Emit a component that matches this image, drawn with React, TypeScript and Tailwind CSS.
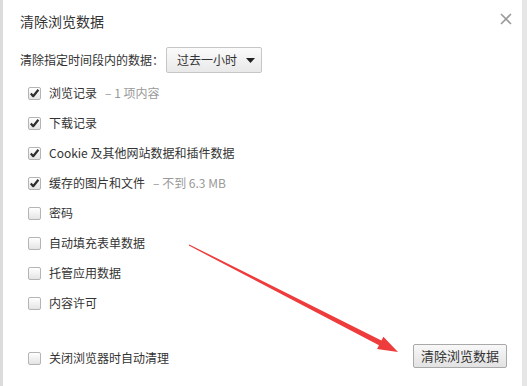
import React from "react";

type Item = { label: string; note?: string; checked: boolean };

const items: Item[] = [
  { label: "浏览记录", note: "– 1 项内容", checked: true },
  { label: "下载记录", checked: true },
  { label: "Cookie 及其他网站数据和插件数据", checked: true },
  { label: "缓存的图片和文件", note: "– 不到 6.3 MB", checked: true },
  { label: "密码", checked: false },
  { label: "自动填充表单数据", checked: false },
  { label: "托管应用数据", checked: false },
  { label: "内容许可", checked: false },
];

function Checkbox({ checked }: { checked: boolean }) {
  return (
    <span className="flex h-[13px] w-[13px] shrink-0 items-center justify-center rounded-[2px] border border-[#b4b4b4] bg-gradient-to-b from-[#ffffff] to-[#e4e4e4] shadow-[inset_0_1px_0_#fff]">
      {checked && (
        <svg width="11" height="11" viewBox="0 0 11 11">
          <path
            d="M1.8 5.6 L4.2 8.2 L9.4 1.8"
            fill="none"
            stroke="#2e2e2e"
            strokeWidth="2.2"
            strokeLinejoin="round"
          />
        </svg>
      )}
    </span>
  );
}

export default function App() {
  return (
    <div className="relative flex h-[386px] w-[527px] overflow-hidden bg-white font-['Noto_Sans_CJK_SC','Noto_Sans',sans-serif] text-[#333]">
      <div className="w-[3px] shrink-0 bg-[#dcdcdc]" />
      <div className="flex flex-1 flex-col">
        <div className="flex items-start justify-between pl-[17px] pr-[10px] pt-[11px]">
          <h1 className="text-[14px] leading-[20px] text-[#333]">清除浏览数据</h1>
          <svg width="12" height="12" viewBox="0 0 12 12" className="mt-[2px]">
            <path d="M1 1 L11 11 M11 1 L1 11" stroke="#9a9a9a" strokeWidth="1.6" />
          </svg>
        </div>

        <div className="mt-[16px] flex items-center gap-[2px] pl-[17px]">
          <span className="text-[12px] leading-[16px]">清除指定时间段内的数据：</span>
          <div className="flex h-[26px] w-[96px] items-center justify-between rounded-[2px] border border-[#c6c6c6] bg-gradient-to-b from-[#fbfbfb] to-[#e9e9e9] pl-[10px] pr-[6px] text-[12px]">
            <span>过去一小时</span>
            <svg width="9" height="5" viewBox="0 0 9 5">
              <path d="M0 0 H9 L4.5 5 Z" fill="#222" />
            </svg>
          </div>
        </div>

        <ul className="mt-[5px] flex flex-col">
          {items.map((item) => (
            <li key={item.label} className="flex h-[30px] items-center gap-[8px] pl-[25px] text-[12px]">
              <Checkbox checked={item.checked} />
              <span>
                {item.label}
                {item.note && <span className="ml-[8px] text-[#999]">{item.note}</span>}
              </span>
            </li>
          ))}
        </ul>

        <div className="mt-[25px] flex h-[30px] items-center justify-between pl-[25px] pr-[15px]">
          <div className="flex items-center gap-[8px] text-[12px]">
            <Checkbox checked={false} />
            <span>关闭浏览器时自动清理</span>
          </div>
          <button
            type="button"
            className="mb-[4px] flex h-[24px] w-[94px] items-center justify-center rounded-[2px] border border-[#a9a9a9] bg-gradient-to-b from-[#f8f8f8] to-[#e2e2e2] text-[13px] text-[#333]"
          >
            清除浏览数据
          </button>
        </div>
      </div>
      <div className="w-[5px] shrink-0 bg-[#e6e6e6]" />

      <svg className="pointer-events-none absolute left-0 top-0" width="527" height="386">
        <polygon
          points="189.2,244.4 381.4,340.6 383.4,336.7 398,352 377,349.1 379,345.2 188.8,245.6"
          fill="#ee3b3b"
        />
      </svg>
    </div>
  );
}
